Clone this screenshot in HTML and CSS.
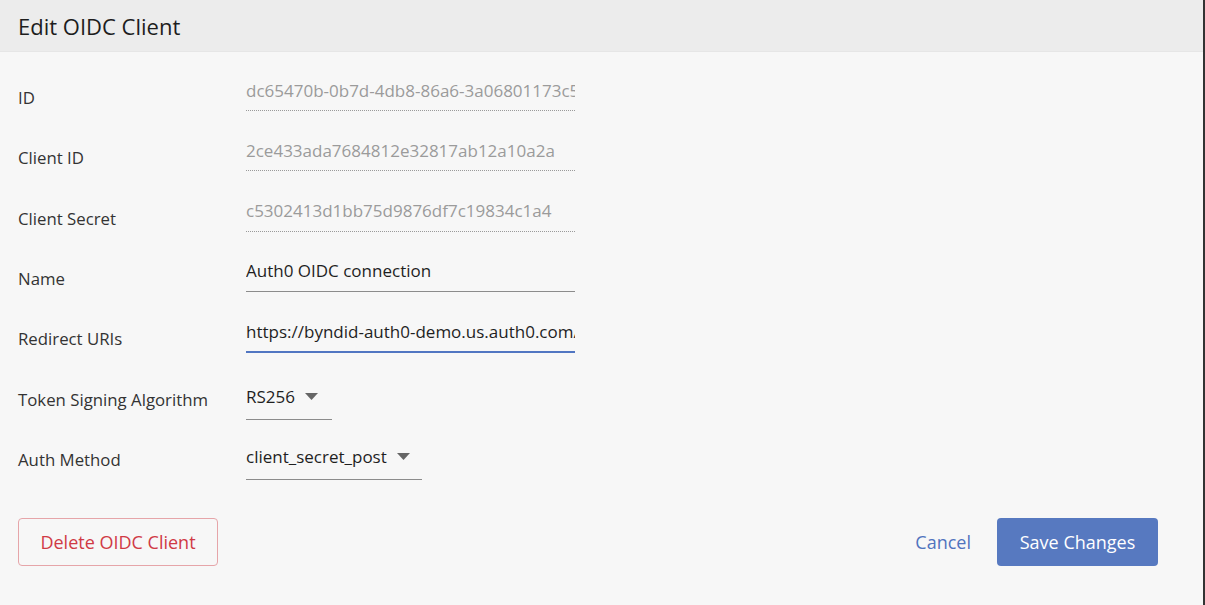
FILE: index.html
```html
<!DOCTYPE html>
<html lang="en">
<head>
    <meta charset="UTF-8">
    <meta name="viewport" content="width=device-width, initial-scale=1.0">
    <title>Edit OIDC Client</title>
    <link rel="stylesheet" href="styles.css">
</head>
<body>
    <div class="modal">
        <div class="modal-header">
            <h1>Edit OIDC Client</h1>
        </div>
        <div class="modal-body">
            <div class="row">
                <label class="label">ID</label>
                <input class="field readonly" type="text" value="dc65470b-0b7d-4db8-86a6-3a06801173c5" readonly>
            </div>
            <div class="row">
                <label class="label">Client ID</label>
                <input class="field readonly" type="text" value="2ce433ada7684812e32817ab12a10a2a" readonly>
            </div>
            <div class="row">
                <label class="label">Client Secret</label>
                <input class="field readonly" type="text" value="c5302413d1bb75d9876df7c19834c1a4" readonly>
            </div>
            <div class="row">
                <label class="label">Name</label>
                <input class="field" type="text" value="Auth0 OIDC connection">
            </div>
            <div class="row">
                <label class="label">Redirect URIs</label>
                <input class="field focused" type="text" value="https://byndid-auth0-demo.us.auth0.com/login/callback">
            </div>
            <div class="row">
                <label class="label">Token Signing Algorithm</label>
                <div class="select select-small">
                    <span>RS256</span>
                    <svg class="caret" width="13" height="7" viewBox="0 0 13 7"><path d="M0 0 L13 0 L6.5 7 Z" fill="#666"/></svg>
                </div>
            </div>
            <div class="row">
                <label class="label">Auth Method</label>
                <div class="select select-wide">
                    <span>client_secret_post</span>
                    <svg class="caret" width="13" height="7" viewBox="0 0 13 7"><path d="M0 0 L13 0 L6.5 7 Z" fill="#666"/></svg>
                </div>
            </div>
            <div class="footer">
                <button class="btn btn-danger">Delete OIDC Client</button>
                <div class="footer-right">
                    <button class="btn btn-link">Cancel</button>
                    <button class="btn btn-primary">Save Changes</button>
                </div>
            </div>
        </div>
    </div>
</body>
</html>
```

FILE: styles.css
```css
* {
    box-sizing: border-box;
}

html, body {
    height: 100%;
}

body {
    margin: 0;
    background: #f7f7f7;
    font-family: "Open Sans", "Liberation Sans", sans-serif;
    color: #222;
}

.modal {
    height: 100%;
    border-right: 2px solid #333;
    background: #f7f7f7;
}

.modal-header {
    height: 52px;
    background: #ececec;
    border-bottom: 1px solid #e6e6e6;
    padding-left: 18px;
    display: flex;
    align-items: center;
}

.modal-header h1 {
    margin: 0;
    font-size: 22px;
    font-weight: 400;
    color: #1d1d1d;
}

.modal-body {
    padding: 22px 45px 0 18px;
}

.row {
    display: grid;
    grid-template-columns: 228px auto;
    height: 60.33px;
    align-items: start;
}

.label {
    margin-top: 14px;
    font-size: 16.8px;
    line-height: 20px;
    color: #333;
}

.field {
    width: 329px;
    height: 37px;
    padding: 0 0 4px 0;
    border: none;
    border-bottom: 1px solid #8c8c8c;
    background: transparent;
    font-family: inherit;
    font-size: 17px;
    color: #1f1f1f;
    outline: none;
}

.field.readonly {
    color: #9b9b9b;
    border-bottom: 1px dotted #9a9a9a;
}

.field.focused {
    border-bottom: 2px solid #5176c2;
    height: 38px;
}

.select {
    height: 44px;
    display: flex;
    align-items: center;
    gap: 10px;
    border-bottom: 1px solid #8c8c8c;
    font-size: 17px;
    color: #1f1f1f;
    padding-bottom: 1px;
}

.select-small {
    width: 86px;
}

.select-wide {
    width: 176px;
}

.footer {
    display: flex;
    justify-content: space-between;
    align-items: center;
    margin-top: 22px;
}

.footer-right {
    display: flex;
    align-items: center;
    gap: 26px;
}

.btn {
    height: 48px;
    font-family: inherit;
    font-size: 18px;
    border-radius: 4px;
    cursor: pointer;
}

.btn-danger {
    width: 200px;
    background: transparent;
    border: 1px solid #e6a5a9;
    color: #d03a45;
}

.btn-link {
    background: none;
    border: none;
    padding: 0;
    color: #5073be;
}

.btn-primary {
    width: 161px;
    border: none;
    background: #5779c0;
    color: #fff;
}
```
